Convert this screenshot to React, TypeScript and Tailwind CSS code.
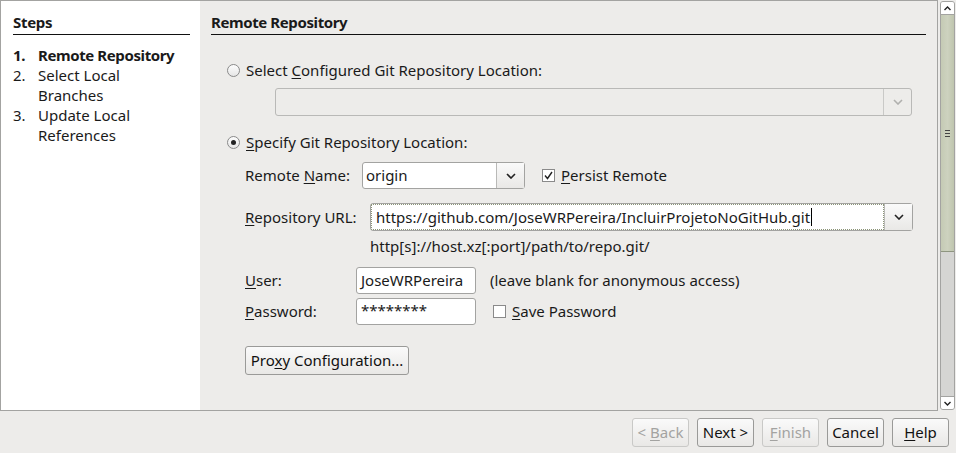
import React from "react";

const font = { fontFamily: '"Noto Sans", "Open Sans", sans-serif' };

// letter with mnemonic underline
const U = ({ children }: { children: React.ReactNode }) => (
  <span className="underline underline-offset-2">{children}</span>
);

const Chevron = ({ color = "#222" }: { color?: string }) => (
  <svg width="10" height="6" viewBox="0 0 10 6">
    <path d="M1 1 L5 5 L9 1" stroke={color} strokeWidth="1.6" fill="none" />
  </svg>
);

const Radio = ({ checked }: { checked?: boolean }) => (
  <span className="flex h-[13px] w-[13px] items-center justify-center rounded-full border border-[#8a8a8a] bg-gradient-to-b from-[#fdfdfd] to-[#e6e6e6]">
    {checked && <span className="h-[5px] w-[5px] rounded-full bg-[#222]" />}
  </span>
);

const Checkbox = ({ checked }: { checked?: boolean }) => (
  <span className="flex h-[13px] w-[13px] items-center justify-center border border-[#8a8a8a] bg-white">
    {checked && (
      <svg width="9" height="9" viewBox="0 0 9 9">
        <path d="M1 4.5 L3.5 7.5 L8 1" stroke="#222" strokeWidth="1.4" fill="none" />
      </svg>
    )}
  </span>
);

const Button = ({
  children,
  disabled,
  className = "",
}: {
  children: React.ReactNode;
  disabled?: boolean;
  className?: string;
}) => (
  <div
    className={`flex h-[29px] items-center justify-center rounded-[3px] border bg-gradient-to-b from-[#fafafa] to-[#e9e8e6] text-[15px] ${
      disabled ? "border-[#c9c9c7] text-[#a3a3a1]" : "border-[#9a9a98] text-[#111]"
    } ${className}`}
  >
    <span className="whitespace-pre">{children}</span>
  </div>
);

export default function App() {
  return (
    <div
      className="flex h-[453px] w-[956px] flex-col bg-[#edecea] text-[15px] text-[#1a1a1a]"
      style={font}
    >
      <div className="flex h-[411px]">
        {/* framed content */}
        <div className="flex h-[411px] w-[938px] border border-[#a3a3a1]">
          {/* steps panel */}
          <div className="w-[199px] bg-white pl-[12px] pr-[10px]">
            <div className="mt-[11px] h-[23px] border-b border-[#111] text-[15px] font-bold leading-[21px] tracking-[-0.3px]">
              Steps
            </div>
            <div className="mt-[10px] leading-[20px]">
              <div className="flex font-bold tracking-[-0.4px]">
                <span className="w-[25px]">1.</span>
                <span>Remote Repository</span>
              </div>
              <div className="flex">
                <span className="w-[25px]">2.</span>
                <span>
                  Select Local
                  <br />
                  Branches
                </span>
              </div>
              <div className="flex">
                <span className="w-[25px]">3.</span>
                <span>
                  Update Local
                  <br />
                  References
                </span>
              </div>
            </div>
          </div>

          {/* main panel */}
          <div className="flex-1 pl-[11px] pr-[11px]">
            <div className="mt-[11px] h-[23px] border-b border-[#111] font-bold leading-[21px] tracking-[-0.4px]">
              Remote Repository
            </div>

            <div className="ml-[16px] mt-[25px] flex h-[20px] items-center gap-[6px]">
              <Radio />
              <span>
                Select <U>C</U>onfigured Git Repository Location:
              </span>
            </div>
            <div className="ml-[64px] mt-[8px] flex h-[28px] w-[637px] rounded-[3px] border border-[#b9b9b7]">
              <div className="flex-1" />
              <div className="flex w-[28px] items-center justify-center border-l border-[#c9c9c7]">
                <Chevron color="#b0b0ae" />
              </div>
            </div>

            <div className="ml-[16px] mt-[16px] flex h-[20px] items-center gap-[6px]">
              <Radio checked />
              <span>
                <U>S</U>pecify Git Repository Location:
              </span>
            </div>

            <div className="ml-[34px] mt-[10px] flex h-[27px] items-center">
              <span className="w-[117px]">
                Remote <U>N</U>ame:
              </span>
              <div className="flex h-[27px] w-[163px] rounded-[3px] border border-[#a3a3a1] bg-white">
                <span className="flex-1 pl-[3px] leading-[25px]">origin</span>
                <div className="flex w-[28px] items-center justify-center border-l border-[#b9b9b7] bg-gradient-to-b from-[#fafafa] to-[#e9e8e6]">
                  <Chevron />
                </div>
              </div>
              <span className="ml-[17px] mr-[6px]">
                <Checkbox checked />
              </span>
              <span>
                <U>P</U>ersist Remote
              </span>
            </div>

            <div className="ml-[34px] mt-[14px] flex h-[28px] items-center">
              <span className="w-[125px]">
                <U>R</U>epository URL:
              </span>
              <div className="flex h-[28px] w-[543px] rounded-[3px] border border-[#a3a3a1] bg-white">
                <div className="flex flex-1 items-center border border-dotted border-[#8c9578] pl-[4px]">
                  <span>https://github.com/JoseWRPereira/IncluirProjetoNoGitHub.git</span>
                  <span className="ml-[1px] h-[18px] w-[1px] bg-black" />
                </div>
                <div className="flex w-[28px] items-center justify-center border-l border-[#b9b9b7] bg-gradient-to-b from-[#fafafa] to-[#e9e8e6]">
                  <Chevron />
                </div>
              </div>
            </div>

            <div className="ml-[159px] mt-[6px] h-[18px] leading-[18px]">
              http[s]://host.xz[:port]/path/to/repo.git/
            </div>

            <div className="ml-[34px] mt-[12px] flex h-[27px] items-center">
              <span className="w-[111px]">
                <U>U</U>ser:
              </span>
              <div className="h-[27px] w-[120px] overflow-hidden rounded-[3px] border border-[#a3a3a1] bg-white pl-[4px] leading-[25px]">
                JoseWRPereira
              </div>
              <span className="ml-[14px]">(leave blank for anonymous access)</span>
            </div>

            <div className="ml-[34px] mt-[4px] flex h-[27px] items-center">
              <span className="w-[111px]">
                <U>P</U>assword:
              </span>
              <div className="h-[27px] w-[120px] rounded-[3px] border border-[#a3a3a1] bg-white pl-[4px] leading-[22px]">
                ********
              </div>
              <span className="ml-[17px] mr-[6px]">
                <Checkbox />
              </span>
              <span>
                <U>S</U>ave Password
              </span>
            </div>

            <Button className="ml-[34px] mt-[21px] h-[28px] w-[164px]">
              Pro<U>x</U>y Configuration...
            </Button>
          </div>
        </div>

        {/* scrollbar */}
        <div className="ml-[2px] mt-[1px] flex h-[409px] w-[15px] flex-col overflow-hidden rounded-[3px] border border-[#a3a3a1] bg-[#d5d5d3]">
          <div className="flex h-[13px] items-center justify-center border-b border-[#a3a3a1] bg-white">
            <svg width="7" height="5" viewBox="0 0 7 5">
              <path d="M0.5 4 L3.5 1 L6.5 4" stroke="#222" strokeWidth="1.4" fill="none" />
            </svg>
          </div>
          <div className="flex h-[237px] flex-col items-center justify-center gap-[2px] border-b border-[#8e9580] bg-gradient-to-r from-[#c4cab4] via-[#cdd2bf] to-[#bfc5ae]">
            <span className="h-[1px] w-[5px] bg-[#444]" />
            <span className="h-[1px] w-[5px] bg-[#444]" />
            <span className="h-[1px] w-[5px] bg-[#444]" />
          </div>
          <div className="flex-1" />
          <div className="flex h-[13px] items-center justify-center border-t border-[#a3a3a1] bg-white">
            <svg width="7" height="5" viewBox="0 0 7 5">
              <path d="M0.5 1 L3.5 4 L6.5 1" stroke="#222" strokeWidth="1.4" fill="none" />
            </svg>
          </div>
        </div>
      </div>

      {/* button bar */}
      <div className="mt-[7px] flex justify-end gap-[8px] pr-[7px]">
        <Button disabled className="w-[57px]">
          {"< "}
          <U>B</U>ack
        </Button>
        <Button className="w-[57px] border-[#7d8570]">{"Next >"}</Button>
        <Button disabled className="w-[57px]">
          <U>F</U>inish
        </Button>
        <Button className="w-[57px]">Cancel</Button>
        <Button className="w-[57px]">
          <U>H</U>elp
        </Button>
      </div>
    </div>
  );
}
